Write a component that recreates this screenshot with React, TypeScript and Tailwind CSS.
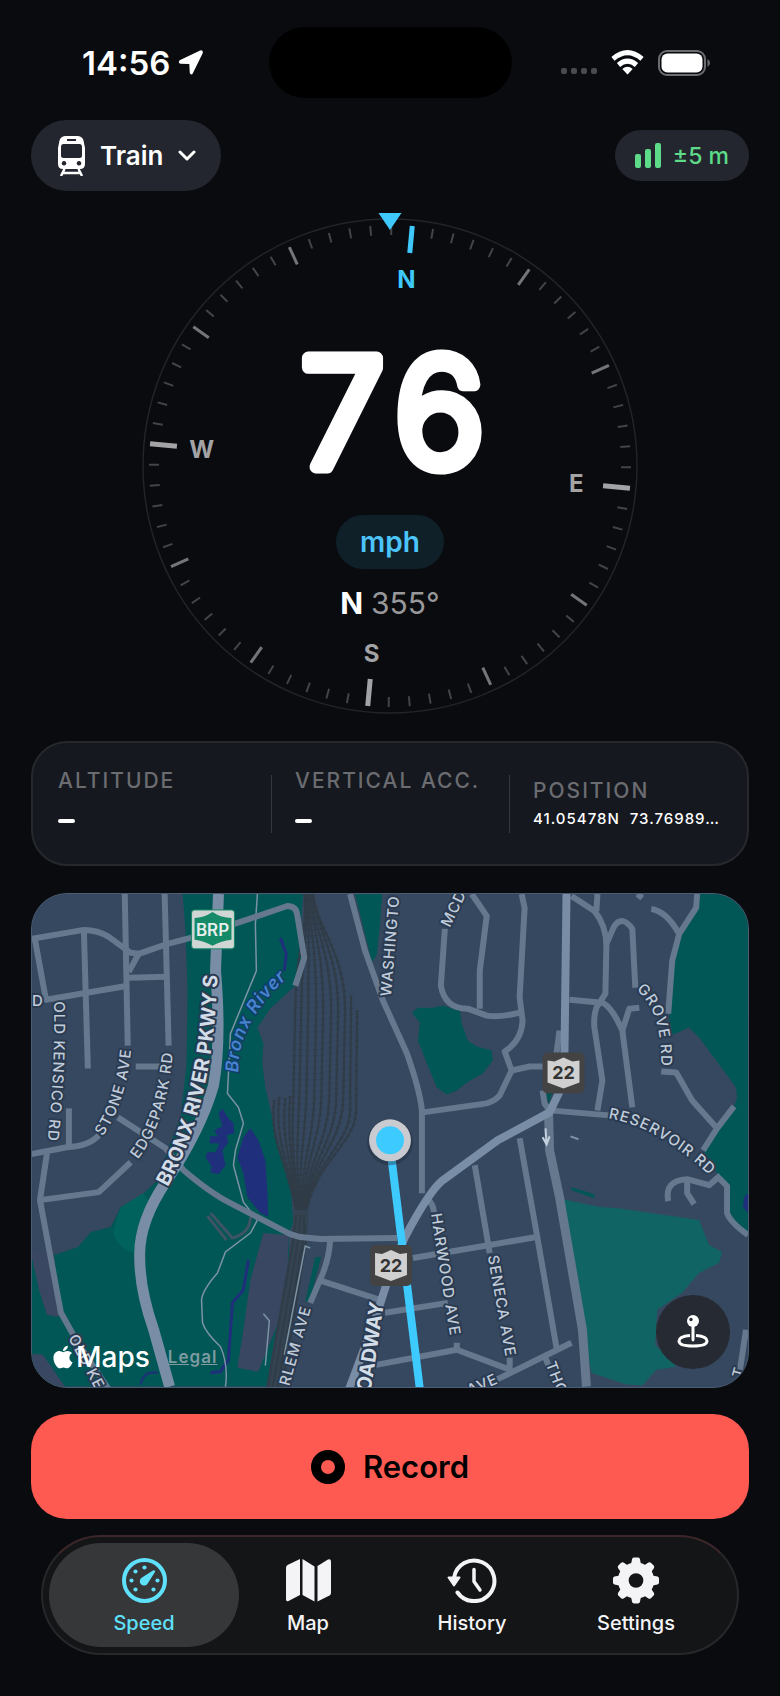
import React, { useState } from "react";
import { FaApple } from "react-icons/fa";

const minorRoads = [
  "M30 938 L83 929 Q97 929 108 936 L130 952 L138 953 L167 943 L190 937 L237 922 L287 905 Q296 905 297 914 L304 957 L295 985",
  "M34 939 L45 999 L127 985",
  "M83 929 L87 1068",
  "M124 893 L127 1045",
  "M164 893 L168 1045",
  "M138 953 L128 971",
  "M127 977 L167 976",
  "M135 1066 L160 1066",
  "M68 1108 L68 1147",
  "M30 1154 L66 1147 Q88 1146 98 1135",
  "M117 1117 L165 1148 L183 1170 Q210 1193 230 1203 L290 1234 L300 1237 L320 1239 L397 1238",
  "M46 1153 L39 1200 L60 1313 L78 1345 L108 1390",
  "M39 1200 L98 1192 L130 1162",
  "M350 893 L365 950 L383 1000 L407 1053 Q420 1090 422 1110 L422 1193",
  "M445 928 L441 985 Q445 1008 468 1008 L487 1015 Q500 1017 520 1012",
  "M472 893 L487 915 L480 970 L480 1008",
  "M522 893 L525 907 L520 997 L523 1020 Q522 1040 505 1051 L512 1070 L500 1095 Q493 1103 480 1104 L423 1112",
  "M512 1070 L530 1066 L545 1066",
  "M560 1030 L556 1060",
  "M543 1090 L545 1103 L550 1110",
  "M520 1138 L537 1233 L557 1348",
  "M413 1258 L490 1245 L537 1237",
  "M475 1165 L490 1253",
  "M510 1358 L510 1370",
  "M427 1198 Q434 1205 434 1212",
  "M457 1343 L457 1350",
  "M385 1313 L448 1303",
  "M372 1366 L457 1350 L510 1370",
  "M497 1380 L572 1343",
  "M545 1356 L549 1366",
  "M318 1280 L380 1300",
  "M330 1240 Q329 1258 322 1275 L310 1303",
  "M572 895 L595 910 Q607 925 607 945 L606 993 L597 1007 Q594 1015 595 1027 L603 1080 L598 1110",
  "M598 893 L597 910",
  "M607 943 L615 925 Q623 914 633 928 L636 987",
  "M640 1007 L630 1008 L623 1030",
  "M570 999 L603 1002 Q613 1007 623 1030 L633 1107",
  "M652 908 Q667 910 680 933",
  "M698 893 L697 907 L680 933 L673 960 L669 1013",
  "M638 893 L643 897",
  "M662 1071 L677 1072 L693 1100 L718 1128",
  "M735 1106 L718 1128 L704 1150",
  "M550 1110 L610 1115",
  "M717 1175 L728 1186 L728 1213 Q731 1222 749 1235",
  "M669 1201 Q665 1180 688 1179 L710 1185 L718 1178",
  "M688 1180 L688 1193 L695 1204",
  "M747 1330 L741 1370",
];

const parks = [
  "M182 893 L185 930 L187 990 L186 1063 L180 1117 L168 1147 L157 1180 L143 1193 L120 1207 L110 1227 L90 1232 L77 1247 L53 1255 L31 1253 V1387 H273 L290 1300 L288 1235 L293 1223 L290 1180 L277 1140 L265 1087 L262 1063 L263 1043 L257 1027 L270 1008 L300 980 L306 955 L300 930 L303 893 Z",
  "M355 893 L382 893 L380 923 L377 953 L372 962 Z",
  "M412 1012 L418 1007 L433 1007 L443 1005 L460 1010 L462 1023 L468 1040 L477 1046 L492 1050 L493 1060 L483 1073 L467 1082 L457 1090 L447 1094 L437 1087 L427 1063 L418 1040 L420 1022 Z",
  "M699 893 L698 908 L680 933 L673 960 L670 1017 L672 1035 L690 1027 L700 1037 L737 1087 L738 1097 L735 1107 L704 1150 L718 1173 L728 1187 L728 1213 L749 1235 V893 Z",
  "M315 1257 L321 1257 L309 1302 L305 1302 Z",
  "M572 1187 L595 1194 L595 1198 L572 1190 Z",
  "M546 1088 L553 1091 L549 1104 Z",
];

const land = [
  "M53 1255 L60 1313 L57 1317 L46 1315 L38 1290 L31 1258 V1250 Z",
  "M263 1233 L288 1235 L287 1300 L258 1372 L237 1368 L243 1330 L250 1280 Z",
  "M31 1354 L42 1355 L64 1387 H31 Z",
];

const water = [
  "M222 1108 L228 1118 L233 1123 L234 1133 L226 1135 L228 1142 L222 1150 L225 1165 L218 1174 L210 1172 L211 1166 L205 1157 L207 1152 L215 1152 L219 1143 L209 1143 L210 1136 L217 1136 L214 1130 L222 1126 L218 1113 Z",
  "M250 1128 L258 1140 L265 1160 L267 1190 L268 1217 L260 1213 L247 1197 L243 1173 L237 1157 L243 1137 Z",
  "M745 1197 L749 1193 V1213 L744 1207 Z",
];

// [top x, widest x, y where the siding starts]
const tracks = [
  [302, 274, 1100],
  [302, 279, 1097],
  [303, 285, 1098],
  [303, 290, 1096],
  [304, 295, 893],
  [305, 301, 893],
  [306, 308, 893],
  [307, 316, 893],
  [309, 323, 893],
  [310, 331, 893],
  [312, 338, 893],
  [313, 345, 893],
  [314, 351, 995],
  [315, 357, 1010],
];

function trackPath(t: number[]) {
  const [top, mid, start] = t;
  const end = 301 + (mid - 316) / 10;
  if (start > 893) return `M${mid} ${start} L${mid - 1} 1110 C${mid - 2} 1145 ${end + (mid - 316) / 4} 1160 ${end} 1215`;
  return `M${top} 893 C${top + 4} 930 ${mid} 950 ${mid} 1010 L${mid - 2} 1100 C${mid - 4} 1145 ${end + (mid - 316) / 4} 1160 ${end} 1215`;
}

const labels = [
  { id: "l1", d: "M53 1001 Q55 1080 42 1180", text: "OLD KENSICO RD" },
  { id: "l2", d: "M102 1136 Q131 1094 132 1020", text: "STONE AVE" },
  { id: "l3", d: "M137 1159 Q172 1116 174 1020", text: "EDGEPARK RD" },
  { id: "l4", d: "M391 996 L403 850", text: "WASHINGTO" },
  { id: "l5", d: "M450 927 L473 880", text: "MCD" },
  { id: "l6", d: "M637 989 Q669 1016 660 1090", text: "GROVE RD" },
  { id: "l7", d: "M609 1118 Q665 1127 723 1188", text: "RESERVOIR RD" },
  { id: "l8", d: "M431 1214 L454 1360", text: "HARWOOD AVE" },
  { id: "l9", d: "M488 1256 L510 1380", text: "SENECA AVE" },
  { id: "l10", d: "M289 1387 L324 1260", text: "RLEM AVE" },
  { id: "l11", d: "M470 1396 L520 1374", text: "AVE" },
  { id: "l12", d: "M546 1364 L571 1430", text: "THO" },
  { id: "l13", d: "M67 1338 L113 1425", text: "OLD KE" },
  { id: "l14", d: "M31 1005 L50 1005", text: "D" },
  { id: "l15", d: "M743 1379 L748 1361", text: "T" },
];

function Shield({ x, y }: { x: number; y: number }) {
  return (
    <g>
      <rect x={x - 21} y={y - 20} width="42" height="41" rx="5" fill="#434343" />
      <path d={`M${x - 16} ${y - 12} L${x - 9} ${y - 11} L${x} ${y - 15} L${x + 9} ${y - 11} L${x + 16} ${y - 12} V${y + 10} L${x} ${y + 16} L${x - 16} ${y + 10} Z`} fill="#cfd0cf" />
      <text x={x} y={y + 7} textAnchor="middle" fontSize="18" fontWeight="700" fill="#333">22</text>
    </g>
  );
}

function MapView() {
  return (
    <svg viewBox="31 893 718 494" className="block h-auto w-full font-['Inter',sans-serif]" role="img" aria-label="Map">
      <defs>
        {labels.map((l) => <path key={l.id} id={l.id} d={l.d} />)}
        <path id="pkwy" d="M167 1187 Q221 1090 217 930" />
        <path id="river" d="M238 1072 Q236 1015 305 962" />
        <path id="broadway" d="M362 1450 L384 1303" />
      </defs>
      <rect x="31" y="893" width="718" height="494" fill="#36485f" />
      {parks.map((d) => <path key={d} d={d} fill="#005755" />)}
      <path d="M563 1199 L600 1207 L617 1208 L700 1220 L710 1245 L723 1252 L720 1263 L700 1273 L683 1293 L658 1310 L656 1345 L677 1367 L657 1370 L643 1386 L627 1385 L592 1373 L583 1330 Z" fill="#106463" />
      <path d="M143 1193 L120 1207 L112 1232 Q118 1250 134 1253 L150 1205 Z" fill="#00625c" />
      {land.map((d) => <path key={d} d={d} fill="#3a4762" />)}
      {water.map((d) => <path key={d} d={d} fill="#1f2f7c" />)}
      <g fill="none" stroke="#1f2f7c" strokeWidth="3">
        <path d="M280 937 L286 953 L284 970" />
        <path d="M248 1260 L243 1290 L232 1303 L228 1360 L220 1372 L210 1373" />
        <path d="M140 1385 Q142 1371 157 1373" strokeWidth="2" />
      </g>
      <path d="M210 1213 L232 1238 Q250 1233 250 1217 M207 1216 L226 1240" fill="none" stroke="#3d5464" strokeWidth="3" />

      {/* rail yard */}
      <g fill="none" stroke="#303c47">
        {tracks.map((t) => (
          <g key={t[1]}>
            <path d={trackPath(t)} strokeWidth="2" />
            <path d={trackPath(t)} strokeWidth="4" strokeDasharray="1 5" />
          </g>
        ))}
        <path d="M301 1210 L299 1240 L273 1390" strokeWidth="15" stroke="#334352" />
        <path d="M296 1215 L293 1240 L267 1390 M300 1215 L298 1240 L272 1390 M304 1215 L303 1240 L277 1390 M303 1215 L306 1240 L282 1390" strokeWidth="2" />
      </g>

      <g fill="none" stroke="#7b93a5" strokeWidth="1.5">
        <path d="M257 893 L255 923 L256 970 L230 1033 L227 1093 L238 1107 L243 1123 L235 1150 L233 1165 L243 1202 L257 1220 L250 1233 L225 1252 L217 1273 Q202 1290 201 1300 L202 1323 Q205 1333 220 1347 Q228 1365 225 1387" />
        <path d="M263 1314 L269 1321 L265 1366" />
        <path d="M310 1248 L305 1246 L284 1355" />
        <path d="M571 1136 L579 1139" strokeWidth="2" />
      </g>

      <g fill="none" stroke="#65788e" strokeWidth="6" strokeLinejoin="round">
        {minorRoads.map((d) => <path key={d} d={d} />)}
        <path d="M549 1113 L550 1150 L560 1197 L583 1330 L587 1387" strokeWidth="9" />
      </g>
      <g fill="none" stroke="#7a8da6" strokeLinejoin="round">
        <path d="M567 893 L565 1050 L563 1085 L550 1112 L498 1140 L443 1180 Q430 1190 405 1237 L391 1270 L375 1320 L345 1400" strokeWidth="8" />
        <path d="M218 893 L215 970 Q221 1040 213 1085 Q200 1130 165 1182 Q138 1222 139 1257 Q139 1290 153 1330 L169 1387" strokeWidth="11" />
      </g>
      <path d="M546 1128 L547 1144 M543 1137 L547 1144 L550 1136" fill="none" stroke="#c3cfdc" strokeWidth="2" />

      <g fontSize="15" fontWeight="500" fill="#c0ccd9" stroke="#2b3b51" strokeWidth="4" strokeLinejoin="round" paintOrder="stroke" letterSpacing="1">
        {labels.map((l) => (
          <text key={l.id}>
            <textPath href={`#${l.id}`}>{l.text}</textPath>
          </text>
        ))}
      </g>
      <g fontSize="20" fontWeight="700" fill="#d3dde8" stroke="#2b3b51" strokeWidth="4" strokeLinejoin="round" paintOrder="stroke">
        <text><textPath href="#pkwy">BRONX RIVER PKWY S</textPath></text>
        <text textAnchor="end"><textPath href="#broadway" startOffset="100%">OADWAY</textPath></text>
      </g>
      <text fontSize="18" fontStyle="italic" fontWeight="600" fill="#4583cf" stroke="#123d68" strokeWidth="3" paintOrder="stroke" letterSpacing="1">
        <textPath href="#river">Bronx River</textPath>
      </text>

      <rect x="191" y="909" width="43" height="39" rx="3" fill="#cfd6d3" stroke="#168a68" strokeWidth="1" />
      <path d="M194 917 Q203 917 212 911 Q221 917 231 917 V939 Q221 940 212 945 Q203 940 194 939 Z" fill="#148a68" />
      <text x="212" y="935" textAnchor="middle" fontSize="17" fontWeight="600" fill="#e6efec">BRP</text>

      <path d="M390 1140 L392 1162 L420 1390" fill="none" stroke="#3dcaff" strokeWidth="8" />
      <Shield x={564} y={1072} />
      <Shield x={391} y={1265} />
      <circle cx="390" cy="1142" r="23" fill="#1f2b3a" opacity="0.4" />
      <circle cx="390" cy="1140" r="21" fill="#c9cbd1" />
      <circle cx="390" cy="1140" r="14" fill="#3dcaff" />
    </svg>
  );
}

function Compass() {
  const heading = 354.7;
  const ticks = Array.from({ length: 72 }, (_, i) => i * 5);
  const cardinals = [
    { name: "N", deg: 0 },
    { name: "E", deg: 90 },
    { name: "S", deg: 180 },
    { name: "W", deg: 270 },
  ];

  return (
    <svg viewBox="142 212 496 503" className="col-start-1 row-start-1 block h-auto w-full font-['Inter',sans-serif]">
      <circle cx="390" cy="466" r="247" fill="none" stroke="#232427" strokeWidth="1.5" />
      {ticks.map((deg) => {
        const cardinal = deg % 90 === 0;
        const major = deg % 30 === 0;
        const inner = cardinal ? 27 : major ? 19 : 10;
        const color = deg === 0 ? "#3fc8fb" : cardinal ? "#a3a3a5" : major ? "#757577" : "#434447";
        return (
          <line
            key={deg}
            x1="390"
            x2="390"
            y1={466 - 241}
            y2={466 - 241 + inner}
            stroke={color}
            strokeWidth={cardinal ? 5 : major ? 3 : 2}
            transform={`rotate(${deg - heading} 390 466)`}
          />
        );
      })}
      {cardinals.map((c) => {
        const a = ((c.deg - heading) * Math.PI) / 180;
        return (
          <text
            key={c.name}
            x={389 + 188 * Math.sin(a)}
            y={466 - 188 * Math.cos(a) + 9}
            textAnchor="middle"
            fontSize="24"
            fontWeight="700"
            fill={c.deg === 0 ? "#3fc8fb" : "#a3a3a5"}
          >
            {c.name}
          </text>
        );
      })}
      <path d="M378.5 213 H401.5 L390 230 Z" fill="#3fc8fb" />
      <text x="391" y="467" textAnchor="middle" fontSize="150" fontWeight="300" fill="#fff" stroke="#fff" strokeWidth="13" strokeLinejoin="round" className="tabular-nums">
        76
      </text>
    </svg>
  );
}

function SpeedIcon() {
  const dots = [[9.5, 22.5], [13.5, 13.5], [22.5, 9.5], [35.5, 22.5], [13.5, 31.5], [31.5, 31.5]];
  return (
    <svg viewBox="0 0 45 45" className="size-[45px]">
      <circle cx="22.5" cy="22.5" r="20.5" fill="none" stroke="currentColor" strokeWidth="4" />
      {dots.map((d) => <circle key={d.join()} cx={d[0]} cy={d[1]} r="2.1" fill="currentColor" />)}
      <path d="M32.5 12.5 Q33.5 13 33 14 L26 25 A4.3 4.3 0 1 1 20 19.5 L31 12.5 Q32 12 32.5 12.5 Z" fill="currentColor" />
    </svg>
  );
}

function MapIcon() {
  return (
    <svg viewBox="0 0 45 45" className="size-[45px]" fill="currentColor">
      <path d="M0 9.5 Q0 8 1.5 7 L14 1 V37 L2.5 43 Q0 44 0 41.5 Z" />
      <path d="M16.5 1 L28.5 8.5 V43.5 L16.5 37 Z" />
      <path d="M31.5 8 L42 1.5 Q45 .5 45 3.5 V35 Q45 36.5 43.5 37.5 L31.5 43.5 Z" />
    </svg>
  );
}

function HistoryIcon() {
  return (
    <svg viewBox="0 0 50 45" className="h-[45px] w-[50px]" fill="none" stroke="currentColor" strokeLinecap="round" strokeLinejoin="round">
      <path d="M7 20 A20.3 20.3 0 1 1 10.5 34.5" strokeWidth="4" />
      <path d="M1.5 19.5 H12.5 L7 27.5 Z" fill="currentColor" strokeWidth="2" />
      <path d="M27 11.5 V23.5 L33 32" strokeWidth="3.5" />
    </svg>
  );
}

function SettingsIcon() {
  const teeth = [0, 45, 90, 135, 180, 225, 270, 315];
  return (
    <svg viewBox="0 0 48 48" className="h-[47px] w-12">
      {teeth.map((t) => (
        <path key={t} d="M20 2 Q20.5 .5 22 .5 H26 Q27.5 .5 28 2 L30 12 H18 Z" fill="currentColor" transform={`rotate(${t} 24 24)`} />
      ))}
      <circle cx="24" cy="24" r="13" fill="none" stroke="currentColor" strokeWidth="11" />
    </svg>
  );
}

const tabs = [
  { name: "Speed", icon: <SpeedIcon /> },
  { name: "Map", icon: <MapIcon /> },
  { name: "History", icon: <HistoryIcon /> },
  { name: "Settings", icon: <SettingsIcon /> },
];

export default function App() {
  const [tab, setTab] = useState("Speed");

  return (
    <div className="min-h-screen bg-[#090b0f] pb-10 font-['Inter',sans-serif] text-white">
      {/* status bar */}
      <div className="grid grid-cols-[1fr_auto_1fr] items-center pt-[27px]">
        <div className="flex items-center gap-2 pl-[82px]">
          <span className="text-[33px] leading-10 font-semibold">14:56</span>
          <svg viewBox="0 0 25 25" className="size-[25px]">
            <path d="M22.5 1.2 L2 11 Q1 12.8 2.5 13 L12 13.2 L12.5 22.5 Q13 24.5 14.2 23 L24 2.8 Q24.3 .6 22.5 1.2 Z" fill="#fff" stroke="#fff" strokeWidth="1.5" strokeLinejoin="round" />
          </svg>
        </div>
        <div className="h-[71px] w-[243px] rounded-full bg-black"></div>
        <div className="flex items-center justify-end gap-[14px] pr-[69px]">
          <div className="flex gap-1 pt-4">
            <i className="h-[6px] w-[6px] rounded-[2px] bg-[#4a4b4e]"></i>
            <i className="h-[6px] w-[6px] rounded-[2px] bg-[#4a4b4e]"></i>
            <i className="h-[6px] w-[6px] rounded-[2px] bg-[#4a4b4e]"></i>
            <i className="h-[6px] w-[6px] rounded-[2px] bg-[#4a4b4e]"></i>
          </div>
          <svg viewBox="0 0 33 25" className="h-[25px] w-[33px]" fill="none" stroke="#fff" strokeWidth="5">
            <path d="M2 8.8 Q16.5 -3.6 31 8.8" />
            <path d="M7.5 15 Q16.5 7.4 25.5 15" />
            <path d="M16.5 24.5 L11.3 19 Q16.5 14.6 21.7 19 Z" fill="#fff" stroke="none" />
          </svg>
          <svg viewBox="0 0 53 26" className="h-[26px] w-[53px]">
            <rect x="1" y="1" width="46" height="24" rx="8" fill="none" stroke="#6c6d70" strokeWidth="2" />
            <rect x="3.5" y="3.5" width="41" height="19" rx="6" fill="#fff" />
            <path d="M49.5 9 Q52 10.5 52 13 Q52 15.5 49.5 17 Z" fill="#6c6d70" />
          </svg>
        </div>
      </div>

      <main className="px-[31px]">
        <div className="mt-[22px] flex items-center justify-between">
          <button type="button" className="flex h-[71px] items-center gap-[15px] rounded-full bg-[#23262e] pr-[25px] pl-[27px]">
            <svg viewBox="0 0 27 40" className="h-10 w-[27px]">
              <path fillRule="evenodd" fill="#fff" d="M7 0 H20 Q24.5 .5 25.5 4.5 L27 12 V28 Q27 33 22 33 H5 Q0 33 0 28 V12 L1.5 4.5 Q2.5 .5 7 0 Z M9 3 V5 H18 V3 Z M5.5 8 Q3 8 3 11 V19.5 Q3 22 5.5 22 H21.5 Q24 22 24 19.5 V11 Q24 8 21.5 8 Z M6 25 A2.3 2.3 0 1 0 6.01 25 Z M21 25 A2.3 2.3 0 1 0 21.01 25 Z" />
              <path d="M6.5 33 L3 40 M20.5 33 L24 40 M5 37 H22" stroke="#fff" strokeWidth="2.5" fill="none" />
            </svg>
            <span className="text-[26px] leading-8 font-semibold">Train</span>
            <svg viewBox="0 0 18 11" className="h-[11px] w-[18px]" fill="none" stroke="#fff" strokeWidth="3" strokeLinecap="round" strokeLinejoin="round">
              <path d="M2 2 L9 9 L16 2" />
            </svg>
          </button>
          <div className="flex h-[51px] items-center gap-3 rounded-full bg-[#23262e] px-5 text-[#5ddb88]">
            <svg viewBox="0 0 26 25" className="h-[25px] w-[26px]" fill="currentColor">
              <rect x="0" y="11" width="6" height="14" rx="2" />
              <rect x="10" y="6" width="6" height="19" rx="2" />
              <rect x="20" y="0" width="6" height="25" rx="2" />
            </svg>
            <span className="text-[23px] leading-8 font-medium">±5 m</span>
          </div>
        </div>

        {/* compass with the readout on top */}
        <div className="mx-auto mt-[21px] grid max-w-[496px]">
          <Compass />
          <div className="z-10 col-start-1 row-start-1 flex flex-col items-center pt-[303px]">
            <button type="button" className="h-[54px] rounded-full bg-[#0f2029] px-6 text-[28px] font-semibold text-[#4cc5fb]">
              mph
            </button>
            <p className="mt-[14px] text-[30px] leading-10 text-[#98989b]">
              <span className="mr-2 font-bold text-white">N</span>355°
            </p>
          </div>
        </div>

        <section className="mt-[26px] grid h-[125px] grid-cols-3 items-center rounded-[36px] border-2 border-[#26282c] bg-[#15181f]">
          <div className="flex h-[58px] flex-col justify-between pl-[25px]">
            <h2 className="text-[21px] leading-3 font-medium tracking-[2px] text-[#6b6c70]">ALTITUDE</h2>
            <span className="mb-[10px] h-1 w-[17px] rounded-sm bg-white" role="img" aria-label="no altitude"></span>
          </div>
          <div className="flex h-[58px] flex-col justify-between border-l border-[#36383c] pl-[23px]">
            <h2 className="text-[21px] leading-3 font-medium tracking-[2px] whitespace-nowrap text-[#6b6c70]">VERTICAL ACC.</h2>
            <span className="mb-[10px] h-1 w-[17px] rounded-sm bg-white" role="img" aria-label="no accuracy"></span>
          </div>
          <div className="h-[58px] border-l border-[#36383c] pt-[6px] pl-[23px]">
            <h2 className="text-[21px] leading-5 font-medium tracking-[2px] text-[#6b6c70]">POSITION</h2>
            <p className="mt-2 text-[15px] leading-5 font-medium tracking-[1px] whitespace-pre">41.05478N  73.76989…</p>
          </div>
        </section>

        <section className="relative mt-[27px] overflow-hidden rounded-[36px] border border-[#4b5d72] bg-[#36485f]">
          <MapView />
          <div className="absolute bottom-[14px] left-[18px] flex items-center">
            <FaApple className="size-[26px]" />
            <span className="text-[28px] leading-8 font-medium">Maps</span>
            <a href="#legal" className="ml-[18px] text-[17px] leading-5 font-semibold tracking-[1px] text-[#7d9ba1] underline">Legal</a>
          </div>
          <button type="button" aria-label="Center on position" className="absolute right-[18px] bottom-[18px] flex size-[74px] items-center justify-center rounded-full bg-[#262a32]">
            <svg viewBox="0 0 32 33" className="h-[33px] w-8">
              <path d="M13 20.5 Q2 21.5 2 26 Q2 31 16 31 Q30 31 30 26 Q30 21.5 19 20.5" fill="none" stroke="#fff" strokeWidth="3" />
              <path d="M14.5 10 H17.5 V25 Q16 28 14.5 25 Z" fill="#fff" />
              <circle cx="16" cy="6" r="6" fill="#fff" />
              <circle cx="14" cy="4.5" r="1.7" fill="#262a32" />
            </svg>
          </button>
        </section>

        <button type="button" className="mt-[26px] flex h-[105px] w-full items-center justify-center gap-[18px] rounded-[36px] bg-[#ff5a52] pt-[2px] text-black">
          <svg viewBox="0 0 34 34" className="size-[34px]">
            <circle cx="17" cy="17" r="12" fill="none" stroke="#000" strokeWidth="10" />
          </svg>
          <span className="text-[31px] leading-10 font-semibold">Record</span>
        </button>
      </main>

      <nav className="mx-[41px] mt-4 grid h-[120px] grid-cols-4 items-center rounded-full border-2 border-[#26282a] border-t-[#3d2629] bg-[#131517] px-[19px]">
        {tabs.map((t) => (
          <button
            key={t.name}
            type="button"
            onClick={() => setTab(t.name)}
            className={`-mx-[13px] flex h-[104px] flex-col items-center justify-center gap-1 rounded-full pt-1 ${tab === t.name ? "bg-[#363738] text-[#5fe0fb]" : "text-[#f4f4f6]"}`}
          >
            <span className="flex h-12 items-center">{t.icon}</span>
            <span className="text-[20px] leading-7 font-medium">{t.name}</span>
          </button>
        ))}
      </nav>
    </div>
  );
}
